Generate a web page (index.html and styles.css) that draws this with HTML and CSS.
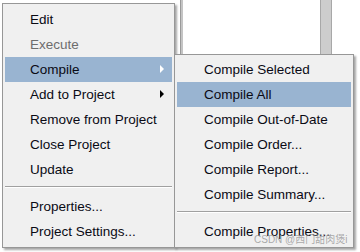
FILE: index.html
```html
<!DOCTYPE html>
<html lang="en">
<head>
    <meta charset="UTF-8">
    <title>Context Menu</title>
    <link rel="stylesheet" href="styles.css">
</head>
<body>
    <div class="desk">
        <div class="frame-line"></div>
        <div class="scroll-strip"></div>

        <!-- Main context menu -->
        <div class="menu main-menu">
            <div class="item">Edit</div>
            <div class="item disabled">Execute</div>
            <div class="item active">Compile<span class="arrow white"></span></div>
            <div class="item">Add to Project<span class="arrow"></span></div>
            <div class="item">Remove from Project</div>
            <div class="item">Close Project</div>
            <div class="item">Update</div>
            <div class="sep"></div>
            <div class="item">Properties...</div>
            <div class="item">Project Settings...</div>
        </div>

        <!-- Compile submenu -->
        <div class="menu sub-menu">
            <div class="item">Compile Selected</div>
            <div class="item active">Compile All</div>
            <div class="item">Compile Out-of-Date</div>
            <div class="item">Compile Order...</div>
            <div class="item">Compile Report...</div>
            <div class="item">Compile Summary...</div>
            <div class="sep"></div>
            <div class="item">Compile Properties...</div>
        </div>

        <div class="watermark">CSDN @西门甜肉煲i</div>
    </div>
</body>
</html>
```

FILE: styles.css
```css
body {
    margin: 0;
    background: #ffffff;
    font-family: "Liberation Sans", Arial, sans-serif;
}

.desk {
    position: relative;
    width: 360px;
    height: 252px;
    overflow: hidden;
    background: #ffffff;
}

.frame-line {
    position: absolute;
    left: 180px;
    top: 0;
    width: 2px;
    height: 54px;
    background: #c4c4c4;
    border-left: 1px solid #9a9a9a;
}

.scroll-strip {
    position: absolute;
    left: 320px;
    top: 0;
    width: 10px;
    height: 54px;
    background: #cdcdcd;
    border-left: 1px solid #a8a8a8;
    border-right: 1px solid #a8a8a8;
}

.menu {
    position: absolute;
    background: #f0f0f0;
    border: 1px solid #979797;
    padding: 3px 1px;
    box-shadow: 2px 2px 2px rgba(0, 0, 0, 0.35);
    box-sizing: border-box;
}

.main-menu {
    left: 2px;
    top: 3px;
    width: 173px;
    height: 245px;
}

.sub-menu {
    left: 174px;
    top: 54px;
    width: 180px;
    height: 194px;
    padding-top: 2px;
}

.item {
    position: relative;
    height: 25px;
    line-height: 25px;
    margin: 0 1px;
    padding-left: 25px;
    font-size: 13.5px;
    color: #0a0a14;
    white-space: nowrap;
}

.sub-menu .item {
    padding-left: 27px;
}

.item.disabled {
    color: #6d6d6d;
}

.item.active {
    background: #99b4d1;
}

.arrow {
    position: absolute;
    right: 8px;
    top: 8px;
    width: 0;
    height: 0;
    border-top: 4px solid transparent;
    border-bottom: 4px solid transparent;
    border-left: 4px solid #000000;
}

.arrow.white {
    border-left-color: #ffffff;
}

.sep {
    height: 12px;
    margin: 0 1px;
    position: relative;
}

.sep::after {
    content: "";
    position: absolute;
    left: 0;
    right: 0;
    top: 4px;
    height: 1px;
    background: #a0a0a0;
    border-bottom: 1px solid #ffffff;
}

.watermark {
    position: absolute;
    left: 254px;
    top: 231px;
    font-size: 10px;
    color: rgba(150, 150, 150, 0.8);
    font-family: "Liberation Sans", "Noto Sans CJK SC", sans-serif;
    white-space: nowrap;
}
```
